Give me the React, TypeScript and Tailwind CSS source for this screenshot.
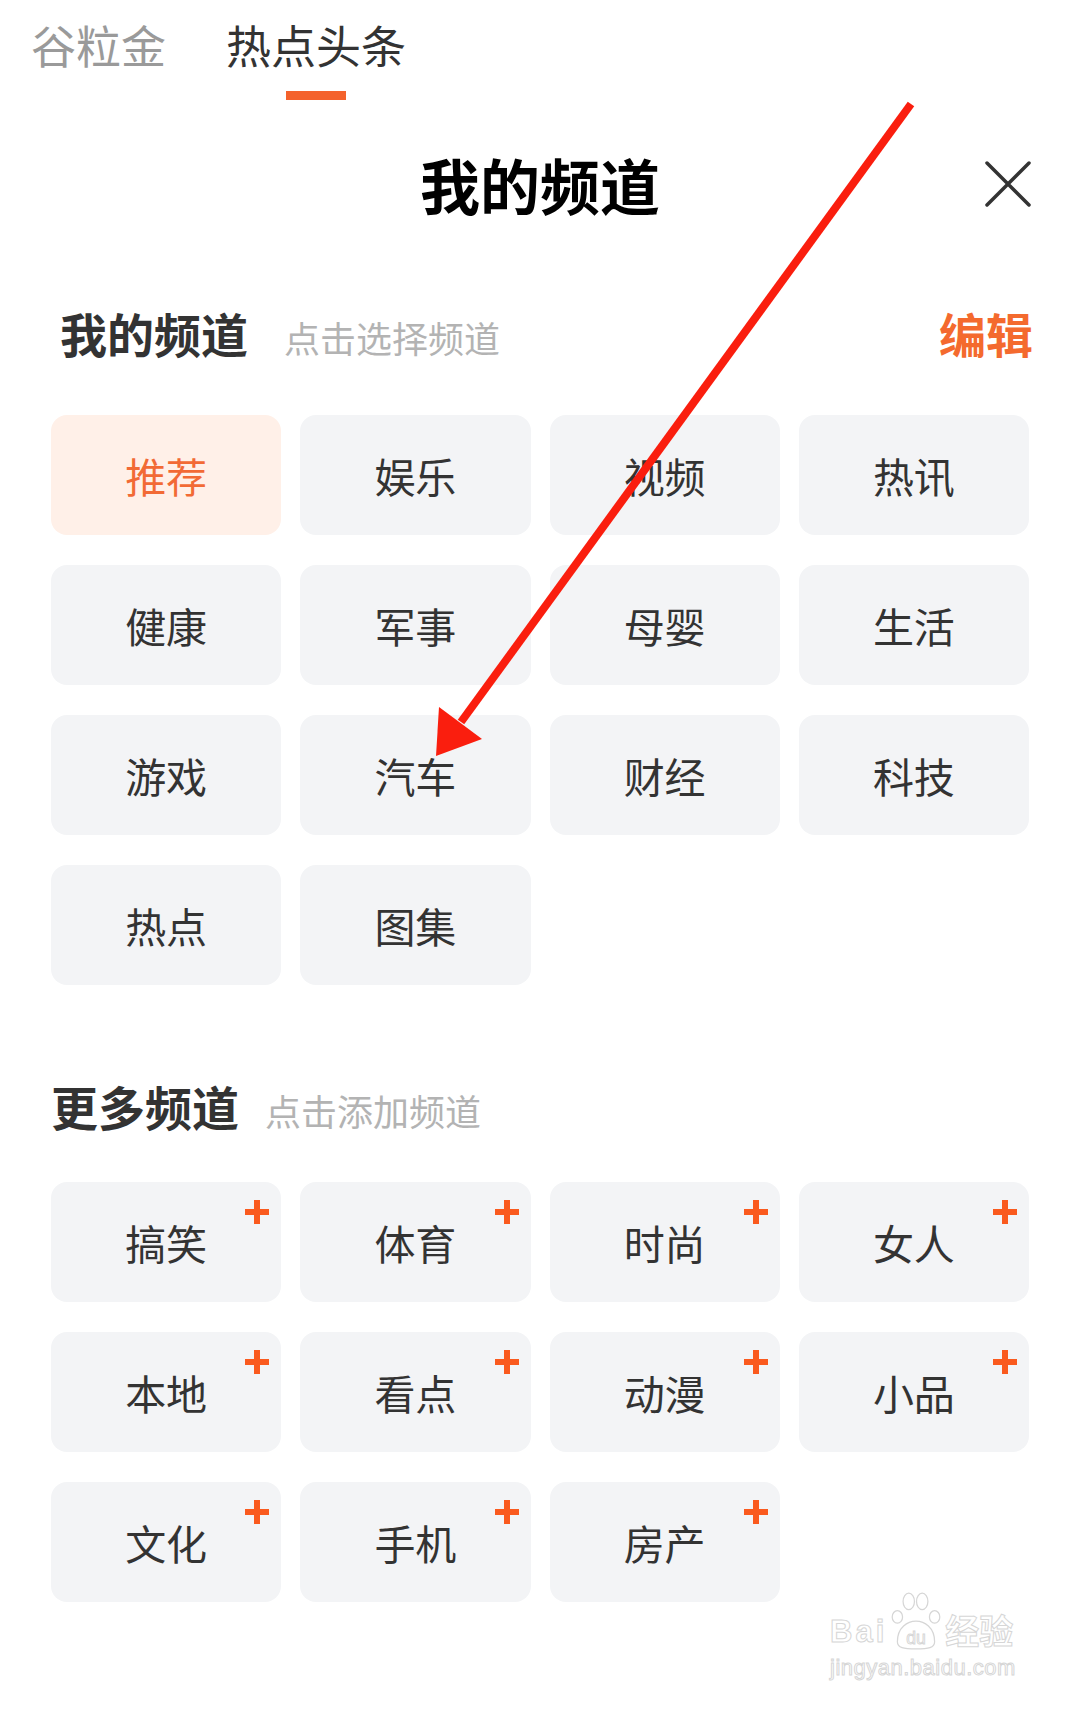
import React from "react"

const MY_CHANNELS = ["推荐", "娱乐", "视频", "热讯", "健康", "军事", "母婴", "生活", "游戏", "汽车", "财经", "科技", "热点", "图集"]
const MORE_CHANNELS = ["搞笑", "体育", "时尚", "女人", "本地", "看点", "动漫", "小品", "文化", "手机", "房产"]

function Tile({ label, active, addable }: { label: string; active?: boolean; addable?: boolean }) {
  return (
    <div
      className={`relative flex h-[120px] items-center justify-center rounded-[16px] ${
        active ? "bg-[#fff0e8] text-[#f26a35]" : "bg-[#f3f4f6] text-[#333]"
      }`}
    >
      <span className="text-[41px] leading-none">{label}</span>
      {addable && (
        <svg className="absolute right-[12px] top-[18px]" width="24" height="24" viewBox="0 0 24 24">
          <rect x="9" y="0" width="6" height="24" fill="#fa5a1e" />
          <rect x="0" y="9" width="24" height="6" fill="#fa5a1e" />
        </svg>
      )}
    </div>
  )
}

function Watermark() {
  const stroke = "text-white [-webkit-text-stroke:1px_#d6d6d6]"
  return (
    <div className="absolute left-[830px] top-[1590px] flex flex-col items-start">
      <div className="flex items-end">
        <span className={`font-['Liberation_Sans',sans-serif] text-[31px] font-bold leading-none tracking-[3px] ${stroke}`}>Bai</span>
        <svg width="58" height="60" viewBox="0 0 52 58" className="-mb-[3px]">
          <g fill="white" stroke="#d6d6d6" strokeWidth="1.2">
            <ellipse cx="8" cy="26" rx="5" ry="6" />
            <ellipse cx="19" cy="11" rx="5.5" ry="8" />
            <ellipse cx="32" cy="11" rx="5.5" ry="8" />
            <ellipse cx="44" cy="26" rx="5" ry="6" />
            <path d="M8 50 C8 36 18 30 26 30 C34 30 44 36 44 50 C44 56 38 57 26 57 C14 57 8 56 8 50 Z" />
          </g>
          <text x="26" y="52" textAnchor="middle" fontSize="17" fontFamily="Liberation Sans, sans-serif" fill="white" stroke="#d6d6d6" strokeWidth="0.9">du</text>
        </svg>
        <span className={`font-['Noto_Sans_CJK_SC',sans-serif] text-[34px] font-bold leading-none ${stroke}`}>经验</span>
      </div>
      <span className={`mt-[10px] font-['Liberation_Sans',sans-serif] text-[22px] leading-none tracking-[0.5px] ${stroke}`}>jingyan.baidu.com</span>
    </div>
  )
}

export default function App() {
  return (
    <div className="relative min-h-[1709px] w-[1080px] overflow-hidden bg-white font-['Noto_Sans_CJK_SC',sans-serif]">
      {/* top tabs */}
      <div className="flex items-start gap-[60px] pl-[31px] pt-[22px]">
        <span className="text-[45px] leading-none text-[#9a9a9a]">谷粒金</span>
        <div className="flex flex-col items-center">
          <span className="text-[45px] leading-none text-[#333]">热点头条</span>
          <span className="mt-[24px] h-[9px] w-[60px] bg-[#f4622c]" />
        </div>
      </div>

      {/* sheet title */}
      <div className="relative mt-[54px] flex items-center justify-center">
        <h1 className="text-[60px] font-bold leading-none text-black">我的频道</h1>
        <svg className="absolute right-[48px]" width="48" height="48" viewBox="0 0 48 48">
          <path d="M3 3 L45 45 M45 3 L3 45" stroke="#333" strokeWidth="3.5" strokeLinecap="round" />
        </svg>
      </div>

      {/* my channels */}
      <div className="mt-[95px] flex items-baseline pl-[60px] pr-[47px]">
        <h2 className="text-[47px] font-bold leading-none text-[#333]">我的频道</h2>
        <span className="ml-[36px] text-[36px] leading-none text-[#b3b3b3]">点击选择频道</span>
        <span className="ml-auto text-[47px] font-bold leading-none text-[#f46a2e]">编辑</span>
      </div>
      <div className="mt-[59px] grid w-[1029px] grid-cols-4 gap-x-[19px] gap-y-[30px] pl-[51px]">
        {MY_CHANNELS.map((c, i) => (
          <Tile key={c} label={c} active={i === 0} />
        ))}
      </div>

      {/* more channels */}
      <div className="mt-[97px] flex items-baseline pl-[51px]">
        <h2 className="text-[47px] font-bold leading-none text-[#333]">更多频道</h2>
        <span className="ml-[26px] text-[36px] leading-none text-[#b3b3b3]">点击添加频道</span>
      </div>
      <div className="mt-[53px] grid w-[1029px] grid-cols-4 gap-x-[19px] gap-y-[30px] pl-[51px]">
        {MORE_CHANNELS.map(c => (
          <Tile key={c} label={c} addable />
        ))}
      </div>

      <Watermark />

      {/* red annotation arrow */}
      <svg className="pointer-events-none absolute left-0 top-0" width="1080" height="1709" viewBox="0 0 1080 1709">
        <line x1="911" y1="104" x2="461" y2="722" stroke="#fa1e0e" strokeWidth="8" />
        <polygon points="436,756 439,707 482,739" fill="#fa1e0e" />
      </svg>
    </div>
  )
}
